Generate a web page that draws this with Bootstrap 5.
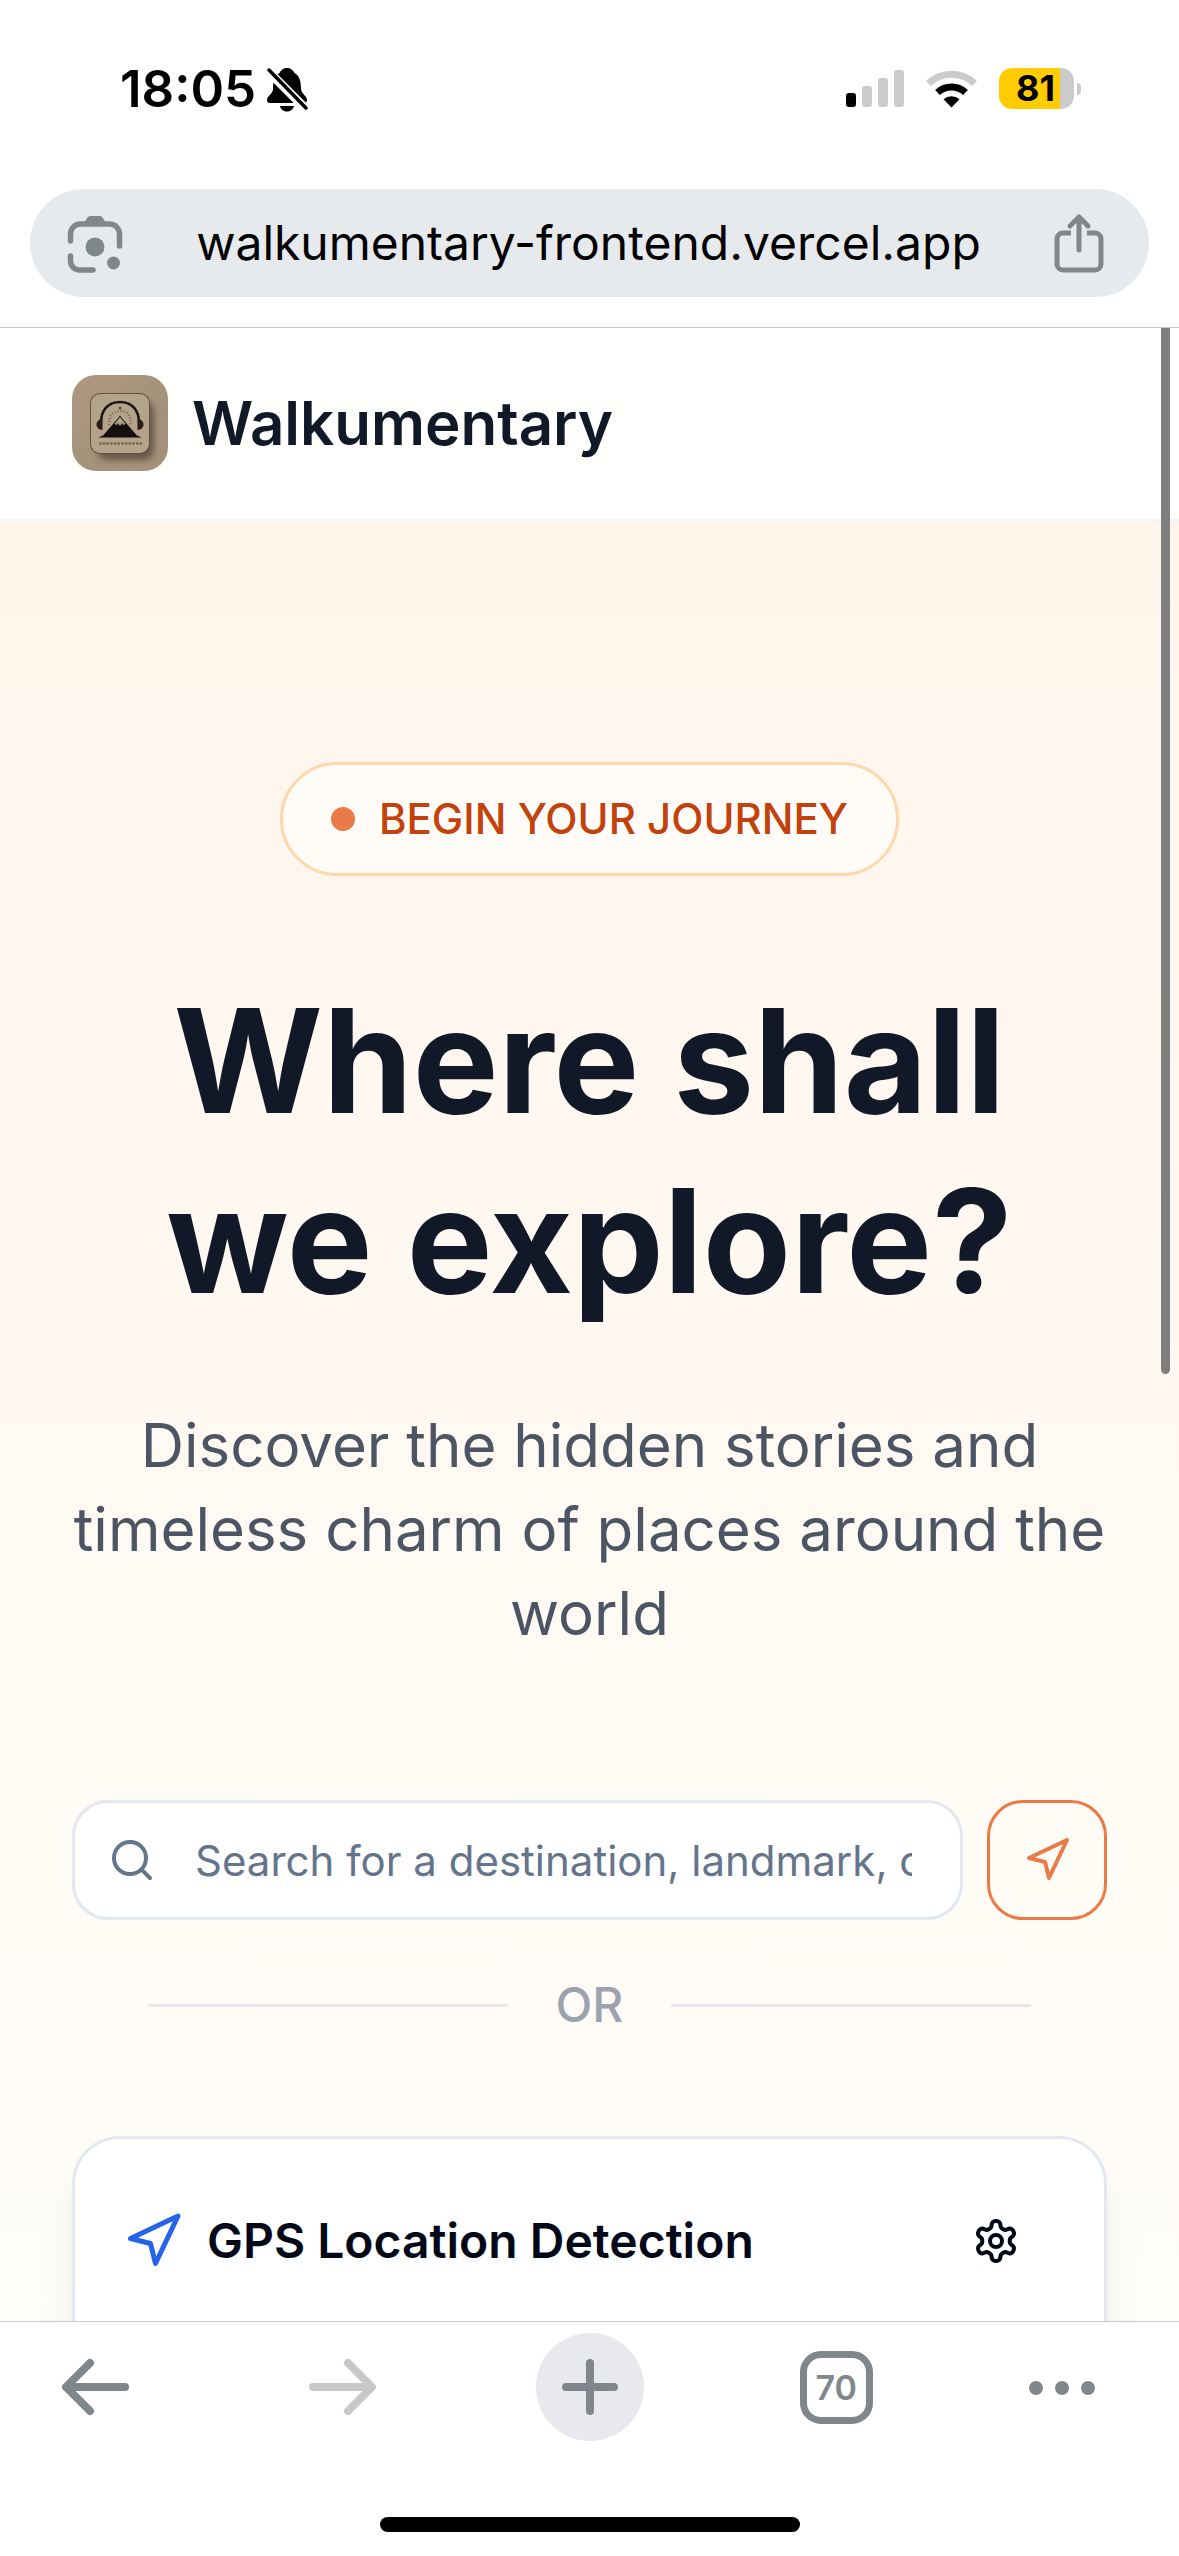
<!DOCTYPE html>
<html lang="en">
<head>
<meta charset="utf-8">
<meta name="viewport" content="width=device-width, initial-scale=1">
<title>Walkumentary</title>
<link href="https://cdn.jsdelivr.net/npm/bootstrap@5.3.0/dist/css/bootstrap.min.css" rel="stylesheet">
<style>
  body { font-family: Inter, "Liberation Sans", sans-serif; height: 100vh; color: #111827; background: #fff; overflow: hidden; }
  svg { display: block; flex: none; }
  .status-bar { height: 189px; padding: 0 98px 12px 120px; }
  .status-time { font-size: 51px; line-height: 60px; font-weight: 600; color: #000; }
  .status-left { gap: 9px; }
  .status-right { gap: 22px; }
  .battery { gap: 3px; }
  .battery-cell { width: 75px; height: 41px; border-radius: 13px; background: linear-gradient(90deg, #ffcc00 0 61px, #cbcbcb 61px); font-size: 36px; line-height: 41px; font-weight: 700; color: #000; padding-right: 2px; }
  .battery-nub { width: 4px; height: 12px; border-radius: 0 4px 4px 0; background: #cbcbcb; }
  .url-bar { margin: 0 30px 30px; height: 108px; border-radius: 54px; background: #e6eaed; padding: 0 43px 0 35px; }
  .url-text { font-size: 48px; line-height: 60px; color: #000; text-decoration: none; }
  .icon-btn { background: none; border: 0; padding: 0; display: flex; align-items: center; justify-content: center; }
  .viewport-pane { flex: 1 1 0; min-height: 0; overflow: hidden; border-top: 1px solid #c8c8c8; border-bottom: 1px solid #c8c8c8; }
  .scroll-thumb { position: absolute; top: 0; right: 9px; width: 9px; height: 52.5%; background: #7f7f7f; border-radius: 0 0 5px 5px; z-index: 3; }
  .site-header { padding: 47px 72px 48px; border-bottom: 3px solid #f3f4f6; background: #fffffd; }
  .site-name { font-size: 60px; line-height: 84px; font-weight: 600; color: #111827; text-decoration: none; }
  .hero { padding: 240px 72px 0; background: linear-gradient(180deg, #fff5eb 0%, #fffefa 100%); min-height: 100%; }
  .pill { border: 3px solid #fed7aa; border-radius: 57px; background: #fffcf8; padding: 24px 48px; gap: 24px; font-size: 42px; line-height: 60px; font-weight: 500; color: #c2410c; }
  .pill-dot { width: 24px; height: 24px; border-radius: 50%; background: #e87b47; }
  .hero-title { margin: 95px 0 72px; font-size: 144px; line-height: 180px; font-weight: 700; color: #111827; }
  .hero-text { margin: 0 -12px 145px; font-size: 60px; line-height: 84px; color: #4b5563; }
  .search-icon { position: absolute; left: 36px; top: 36px; color: #64748b; pointer-events: none; }
  .search-input { height: 120px; border: 3px solid #e2e8f0; border-radius: 36px; background: #fff; padding: 0 48px 0 120px; font-size: 42px; line-height: 60px; }
  .search-input::placeholder { color: #64748b; opacity: 1; }
  .locate-btn { width: 120px; height: 120px; border: 3px solid #e87b47; border-radius: 36px; color: #e87b47; flex: none; }
  .divider { padding: 0 76px; margin: 49px 0 95px; gap: 48px; font-size: 48px; line-height: 72px; font-weight: 500; color: #9ca3af; }
  .divider-line { height: 3px; background: #e5e7eb; }
  .gps-card { border: 3px solid #e2e8f0; border-radius: 48px; background: #fff; padding: 48px; min-height: 600px; box-shadow: 0 30px 45px -9px rgba(0,0,0,.1), 0 12px 18px -12px rgba(0,0,0,.1); }
  .gps-title { font-size: 48px; line-height: 72px; font-weight: 600; color: #020817; margin: 0; gap: 24px; }
  .settings-btn { width: 144px; height: 108px; color: #020817; margin-right: -12px; }
  .tool-bar { padding: 11px 84px 0 62px; }
  .tool-bar .icon-btn { height: 108px; color: #80878a; }
  .tab-count { width: 74px; }
  .tab-count-box { width: 73px; height: 73px; border: 7px solid #80878a; border-radius: 21px; font-size: 34px; line-height: 59px; font-weight: 600; }
  .home-bar { width: 420px; height: 15px; border-radius: 8px; background: #000; margin: 76px auto 24px; }
</style>
</head>
<body class="d-flex flex-column">
  <div class="status-bar d-flex align-items-center justify-content-between">
    <div class="status-left d-flex align-items-center">
      <span class="status-time">18:05</span>
      <svg width="44" height="46" viewBox="0 0 44 46" role="img" aria-label="Silent">
        <path d="M22 2c4 0 6 2 7.500 5C35 10 36 16 36 23c.5 5 6 7 6 11 0 2-1 3-3 3H5c-2 0-3-1-3-3 0-4 6-6 6-11 0-7 1-13 6.500-16C16 4 18 2 22 2z"/>
        <path d="M15 40h14c-1 4-4 5.500-7 5.500S16 44 15 40z"/>
        <path d="M1 3l41 41" stroke="#fff" stroke-width="9"/>
        <path d="M4 4l37 38" stroke="#000" stroke-width="3.500" stroke-linecap="round"/>
      </svg>
    </div>
    <div class="status-right d-flex align-items-center">
      <svg width="58" height="38" viewBox="0 0 58 38" role="img" aria-label="Signal">
        <rect y="23" width="10" height="14" rx="3"/>
        <g fill="#cbcbcb"><rect x="16" y="16" width="10" height="21" rx="3"/><rect x="32" y="8" width="10" height="29" rx="3"/><rect x="48" width="10" height="37" rx="3"/></g>
      </svg>
      <svg width="51" height="38" viewBox="0 0 51 38" role="img" aria-label="Wi-Fi" fill="none" stroke-width="7">
        <path d="M2.500 13.500a33 33 0 0 1 46 0" stroke="#cbcbcb"/>
        <path d="M11.500 22.500a20.500 20.500 0 0 1 28 0" stroke="#000"/>
        <path d="M17.500 29.300a12 12 0 0 1 16 0L25.500 37.500z" fill="#000" stroke="none"/>
      </svg>
      <div class="battery d-flex align-items-center">
        <div class="battery-cell text-center">81</div>
        <div class="battery-nub"></div>
      </div>
    </div>
  </div>

  <div class="url-bar d-flex align-items-center justify-content-between">
    <button class="icon-btn" aria-label="Search with camera">
      <svg width="60" height="60" viewBox="0 0 60 60" fill="none" stroke="#80878a" stroke-width="5.500" stroke-linecap="round">
        <path d="M5.500 28V21a10 10 0 0 1 10-10h29a10 10 0 0 1 10 10v12M5.500 43v5a9 9 0 0 0 9 9H28"/>
        <path d="M19 10l3.500-5.500Q23.500 3 25 3h10q1.500 0 2.500 1.500L41 10z" fill="#80878a" stroke="none"/>
        <circle cx="30" cy="34" r="9.500" fill="#80878a" stroke="none"/>
        <circle cx="48.500" cy="50" r="6.500" fill="#80878a" stroke="none"/>
      </svg>
    </button>
    <a class="url-text" href="#">walkumentary-frontend.vercel.app</a>
    <button class="icon-btn" aria-label="Share">
      <svg width="54" height="60" viewBox="0 0 54 60" fill="none" stroke="#80878a" stroke-width="5" stroke-linecap="round" stroke-linejoin="round">
        <path d="M19 20H11a6 6 0 0 0-6 6v25a6 6 0 0 0 6 6h32a6 6 0 0 0 6-6V26a6 6 0 0 0-6-6h-8" stroke-linecap="butt"/>
        <path d="M27 37V5M18 13l9-9 9 9"/>
      </svg>
    </button>
  </div>

  <main class="viewport-pane position-relative d-flex flex-column">
    <div class="scroll-thumb"></div>
    <header class="site-header">
      <div class="d-flex align-items-center gap-4">
        <svg width="96" height="96" viewBox="0 0 96 96" role="img" aria-label="Walkumentary logo">
          <defs>
            <linearGradient id="tan" x1="0" x2="1" y1="0" y2="1"><stop stop-color="#b09780"/><stop offset=".5" stop-color="#a5937c"/><stop offset="1" stop-color="#a68f78"/></linearGradient>
            <filter id="soft" x="-20%" y="-20%" width="150%" height="150%"><feGaussianBlur stdDeviation="3"/></filter>
          </defs>
          <rect width="96" height="96" rx="24" fill="url(#tan)"/>
          <rect x="25" y="26" width="57" height="59" rx="10" fill="#4b4034" opacity=".7" filter="url(#soft)"/>
          <rect x="18" y="18" width="60" height="61" rx="10" fill="#5f5243"/>
          <rect x="19" y="19" width="58" height="59" rx="9" fill="#b3a38a"/>
          <path d="M29 48c0-13 7-21 19-21s19 8 19 21" fill="none" stroke="#1d1713" stroke-width="2.500"/>
          <path d="M37 50c0-9 3-14 11-14s11 5 11 14" fill="none" stroke="#75674f" stroke-width="2.500" stroke-dasharray="1 2"/>
          <path d="M30.500 44v11c-4 0-6-3-6-5.500s2-5.500 6-5.500zM65.500 44v11c4 0 6-3 6-5.500s-2-5.500-6-5.500z" fill="#2a1d17"/>
          <path d="M26 62.500l5-2 14-16 3-4 3 4 14 16 5 2z" fill="#15100d"/>
          <path d="M42.500 49l5.500-7 5.500 7-2.500 1-1-2-2 3-2-3-1 2z" fill="#b3a38a"/>
          <path d="M27 68.500h43" stroke="#75674f" stroke-width="2.500" stroke-dasharray="2.500 1.200"/>
          <circle cx="48" cy="33" r="1.300" fill="#4a3e32"/>
        </svg>
        <a class="site-name" href="#">Walkumentary</a>
      </div>
    </header>

    <section class="hero text-center">
      <div class="pill d-inline-flex align-items-center"><span class="pill-dot"></span>BEGIN YOUR JOURNEY</div>
      <h1 class="hero-title">Where shall<br>we explore?</h1>
      <p class="hero-text">Discover the hidden stories and timeless charm of places around the world</p>
      <form class="d-flex gap-4">
        <div class="position-relative flex-grow-1">
          <label class="visually-hidden" for="place">Destination</label>
          <svg class="search-icon" width="48" height="48" viewBox="0 0 24 24" fill="none" stroke="currentColor" stroke-width="2" stroke-linecap="round" stroke-linejoin="round"><circle cx="11" cy="11" r="8"/><path d="m21 21-4.300-4.300"/></svg>
          <input id="place" type="text" class="search-input form-control" placeholder="Search for a destination, landmark, or address...">
        </div>
        <button type="button" class="locate-btn icon-btn" aria-label="Use my location">
          <svg width="48" height="48" viewBox="0 0 24 24" fill="none" stroke="currentColor" stroke-width="2" stroke-linecap="round" stroke-linejoin="round"><path d="M3 11 22 2 13 21 11 13z"/></svg>
        </button>
      </form>
      <div class="divider d-flex align-items-center">
        <span class="divider-line flex-grow-1"></span>OR<span class="divider-line flex-grow-1"></span>
      </div>
      <div class="gps-card">
        <div class="d-flex align-items-center justify-content-between">
          <h2 class="gps-title d-flex align-items-center">
            <svg width="60" height="60" viewBox="0 0 24 24" fill="none" stroke="#2563eb" stroke-width="2" stroke-linecap="round" stroke-linejoin="round"><path d="M3 11 22 2 13 21 11 13z"/></svg>
            GPS Location Detection
          </h2>
          <button class="settings-btn icon-btn" aria-label="Settings">
            <svg width="48" height="48" viewBox="0 0 24 24" fill="none" stroke="currentColor" stroke-width="2" stroke-linecap="round" stroke-linejoin="round"><path d="M12.220 2h-.44a2 2 0 0 0-2 2v.18a2 2 0 0 1-1 1.730l-.43.25a2 2 0 0 1-2 0l-.15-.08a2 2 0 0 0-2.730.73l-.22.38a2 2 0 0 0 .73 2.730l.15.1a2 2 0 0 1 1 1.720v.51a2 2 0 0 1-1 1.740l-.15.09a2 2 0 0 0-.73 2.730l.22.38a2 2 0 0 0 2.730.73l.15-.08a2 2 0 0 1 2 0l.43.25a2 2 0 0 1 1 1.730V20a2 2 0 0 0 2 2h.44a2 2 0 0 0 2-2v-.18a2 2 0 0 1 1-1.730l.43-.25a2 2 0 0 1 2 0l.15.08a2 2 0 0 0 2.730-.73l.22-.39a2 2 0 0 0-.73-2.730l-.15-.08a2 2 0 0 1-1-1.740v-.5a2 2 0 0 1 1-1.740l.15-.09a2 2 0 0 0 .73-2.730l-.22-.38a2 2 0 0 0-2.730-.73l-.15.08a2 2 0 0 1-2 0l-.43-.25a2 2 0 0 1-1-1.730V4a2 2 0 0 0-2-2z"/><circle cx="12" cy="12" r="3"/></svg>
          </button>
        </div>
      </div>
    </section>
  </main>

  <footer>
    <nav class="tool-bar d-flex justify-content-between" aria-label="Browser">
      <button class="icon-btn" aria-label="Back">
        <svg width="90" height="68" viewBox="0 0 90 68" fill="none" stroke="currentColor" stroke-width="8" stroke-linecap="round" stroke-linejoin="round"><path d="M28 10 4 34l24 24M6 34h57"/></svg>
      </button>
      <button class="icon-btn" aria-label="Forward" disabled>
        <svg width="72" height="68" viewBox="0 0 72 68" fill="none" stroke="#c8c8c8" stroke-width="8" stroke-linecap="round" stroke-linejoin="round"><path d="M40 10l24 24-24 24M62 34H5"/></svg>
      </button>
      <button class="icon-btn" aria-label="New tab">
        <svg width="108" height="108" viewBox="0 0 108 108" fill="none" stroke="#80868c" stroke-width="8" stroke-linecap="round"><circle cx="54" cy="54" r="54" fill="#e8e9ed" stroke="none"/><path d="M54 30v48M30 54h48"/></svg>
      </button>
      <button class="icon-btn tab-count" aria-label="70 open tabs"><span class="tab-count-box text-center">70</span></button>
      <button class="icon-btn" aria-label="More">
        <svg width="66" height="16" viewBox="0 0 66 16" fill="currentColor"><circle cx="7" cy="9" r="7"/><circle cx="33" cy="9" r="7"/><circle cx="59" cy="9" r="7"/></svg>
      </button>
    </nav>
    <div class="home-bar"></div>
  </footer>
<script src="https://cdn.jsdelivr.net/npm/bootstrap@5.3.0/dist/js/bootstrap.bundle.min.js"></script>
</body>
</html>
